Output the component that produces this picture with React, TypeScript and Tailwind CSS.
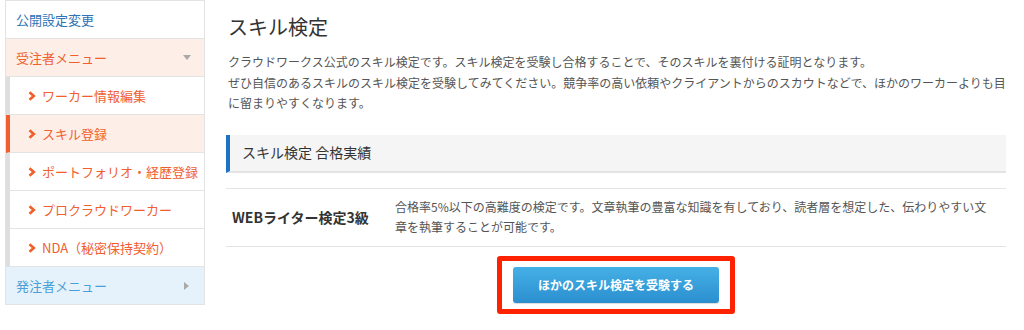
import React from "react";

const font = { fontFamily: '"Noto Sans CJK JP", "Noto Sans", sans-serif' };

function Chevron() {
  return (
    <svg width="8" height="10" viewBox="0 0 8 10" className="shrink-0">
      <path d="M1.5 1.2 L5.8 5 L1.5 8.8" fill="none" stroke="#f0602e" strokeWidth="2.6" />
    </svg>
  );
}

const subItems = [
  { label: "ワーカー情報編集", active: false },
  { label: "スキル登録", active: true },
  { label: "ポートフォリオ・経歴登録", active: false },
  { label: "プロクラウドワーカー", active: false },
  { label: "NDA（秘密保持契約）", active: false },
];

function Sidebar() {
  return (
    <aside className="w-[200px] shrink-0 self-start border border-[#e3e3e3] text-[13px]">
      <div className="flex h-[38px] items-center border-b border-[#e3e3e3] bg-white px-[10px] text-[#2f73b5]">
        公開設定変更
      </div>
      <div className="flex h-[38px] items-center justify-between border-b border-[#e3e3e3] bg-[#fdefe7] px-[10px] text-[#f0602e]">
        <span>受注者メニュー</span>
        <svg width="8" height="5" viewBox="0 0 8 5" className="mr-[3px]">
          <path d="M0 0 H8 L4 5 Z" fill="#aaa" />
        </svg>
      </div>
      {subItems.map((it) => (
        <div
          key={it.label}
          className={
            "flex h-[38px] items-center gap-[6px] border-b border-l-[4px] border-b-[#e3e3e3] pl-[18px] text-[#f0602e] " +
            (it.active ? "border-l-[#f0602e] bg-[#fdefe7]" : "border-l-[#dedede] bg-white")
          }
        >
          <Chevron />
          <span>{it.label}</span>
        </div>
      ))}
      <div className="flex h-[37px] items-center justify-between bg-[#e6f2fb] px-[10px] text-[#4a9fd8]">
        <span>発注者メニュー</span>
        <svg width="5" height="8" viewBox="0 0 5 8" className="mr-[5px]">
          <path d="M0 0 L5 4 L0 8 Z" fill="#aaa" />
        </svg>
      </div>
    </aside>
  );
}

export default function App() {
  return (
    <div className="flex h-[330px] w-[1024px] gap-[21px] bg-white pl-[5px] text-[#333]" style={font}>
      <Sidebar />
      <main className="w-[780px]">
        <h1 className="mt-[14px] pl-[2px] text-[20px] leading-[26px] text-[#333]">スキル検定</h1>
        <div className="mt-[12px] pl-[2px] text-[12px] leading-[20.5px] text-[#555]">
          <p>クラウドワークス公式のスキル検定です。スキル検定を受験し合格することで、そのスキルを裏付ける証明となります。</p>
          <p>ぜひ自信のあるスキルのスキル検定を受験してみてください。競争率の高い依頼やクライアントからのスカウトなどで、ほかのワーカーよりも目に留まりやすくなります。</p>
        </div>
        <div className="mt-[21px] flex h-[38px] items-center border-b-2 border-l-[4px] border-b-[#e4e4e4] border-l-[#1f72c4] bg-[#f5f5f5] pl-[12px] text-[14px] text-[#333]">
          スキル検定 合格実績
        </div>
        <div className="mt-[15px] flex h-[59px] items-center border-y border-[#e4e4e4]">
          <div className="w-[169px] shrink-0 pl-[6px] text-[14px] font-bold text-[#333]">WEBライター検定3級</div>
          <p className="pr-[18px] text-[12px] leading-[20px] text-[#555]">
            合格率5%以下の高難度の検定です。文章執筆の豊富な知識を有しており、読者層を想定した、伝わりやすい文章を執筆することが可能です。
          </p>
        </div>
        <div className="mt-[9px] flex justify-center">
          <div className="rounded-[3px] border-[5px] border-[#ff2200] px-[11px] py-[6px]">
            <button className="h-[36px] w-[206px] rounded-[3px] bg-gradient-to-b from-[#45b0e6] to-[#2b8fcf] text-[12px] font-bold text-white shadow-[0_1px_1px_rgba(0,0,0,0.15)]">
              ほかのスキル検定を受験する
            </button>
          </div>
        </div>
      </main>
    </div>
  );
}
